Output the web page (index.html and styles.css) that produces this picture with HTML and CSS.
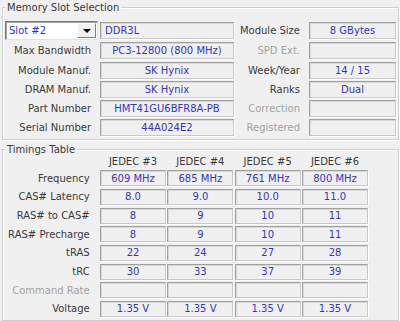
FILE: index.html
```html
<!DOCTYPE html>
<html lang="en">
<head>
    <meta charset="UTF-8">
    <title>SPD</title>
    <link rel="stylesheet" href="styles.css">
</head>
<body>
<fieldset class="group slot-group">
    <legend>Memory Slot Selection</legend>
    <div class="slot-grid">
        <div class="select">
            <span class="select-text">Slot #2</span>
            <span class="select-btn"><span class="arrow"></span></span>
        </div>
        <div class="field left">DDR3L</div>
        <div class="label">Module Size</div>
        <div class="field">8 GBytes</div>

        <div class="label">Max Bandwidth</div>
        <div class="field">PC3-12800 (800 MHz)</div>
        <div class="label off">SPD Ext.</div>
        <div class="field"></div>

        <div class="label">Module Manuf.</div>
        <div class="field">SK Hynix</div>
        <div class="label">Week/Year</div>
        <div class="field">14 / 15</div>

        <div class="label">DRAM Manuf.</div>
        <div class="field">SK Hynix</div>
        <div class="label">Ranks</div>
        <div class="field">Dual</div>

        <div class="label">Part Number</div>
        <div class="field">HMT41GU6BFR8A-PB</div>
        <div class="label off">Correction</div>
        <div class="field"></div>

        <div class="label">Serial Number</div>
        <div class="field">44A024E2</div>
        <div class="label off">Registered</div>
        <div class="field"></div>
    </div>
</fieldset>

<fieldset class="group timing-group">
    <legend>Timings Table</legend>
    <div class="timing-grid">
        <div></div>
        <div class="head">JEDEC #3</div>
        <div class="head">JEDEC #4</div>
        <div class="head">JEDEC #5</div>
        <div class="head">JEDEC #6</div>

        <div class="label">Frequency</div>
        <div class="field">609 MHz</div>
        <div class="field">685 MHz</div>
        <div class="field">761 MHz</div>
        <div class="field">800 MHz</div>

        <div class="label">CAS# Latency</div>
        <div class="field">8.0</div>
        <div class="field">9.0</div>
        <div class="field">10.0</div>
        <div class="field">11.0</div>

        <div class="label">RAS# to CAS#</div>
        <div class="field">8</div>
        <div class="field">9</div>
        <div class="field">10</div>
        <div class="field">11</div>

        <div class="label">RAS# Precharge</div>
        <div class="field">8</div>
        <div class="field">9</div>
        <div class="field">10</div>
        <div class="field">11</div>

        <div class="label">tRAS</div>
        <div class="field">22</div>
        <div class="field">24</div>
        <div class="field">27</div>
        <div class="field">28</div>

        <div class="label">tRC</div>
        <div class="field">30</div>
        <div class="field">33</div>
        <div class="field">37</div>
        <div class="field">39</div>

        <div class="label off">Command Rate</div>
        <div class="field"></div>
        <div class="field"></div>
        <div class="field"></div>
        <div class="field"></div>

        <div class="label">Voltage</div>
        <div class="field">1.35 V</div>
        <div class="field">1.35 V</div>
        <div class="field">1.35 V</div>
        <div class="field">1.35 V</div>
    </div>
</fieldset>
</body>
</html>
```

FILE: styles.css
```css
* {
    box-sizing: border-box;
    margin: 0;
    padding: 0;
}

body {
    width: 400px;
    height: 321px;
    overflow: hidden;
    background-color: #f0f0f0;
    font-family: "DejaVu Sans", Verdana, sans-serif;
    font-size: 10px;
    color: #3a3a3a;
}

.group {
    border: 1px solid #cfcfcf;
    box-shadow: inset 1px 1px 0 #fff, 1px 1px 0 #fff;
    margin: 0 1px 0 2px;
    padding: 0;
    min-width: 0;
}

.group legend {
    margin-left: 2px;
    padding: 0 2px;
    line-height: 13px;
    background-color: #f0f0f0;
    color: #3a3a3a;
}

.slot-group {
    margin-top: 1px;
    padding-bottom: 3px;
}

.timing-group {
    margin-top: 3px;
    padding-bottom: 3px;
}

.slot-grid {
    display: grid;
    grid-template-columns: 97px 135px 74px 87px;
    grid-template-rows: 19px repeat(5, 17px);
    row-gap: 2.3px;
    padding-top: 7px;
}

.timing-grid {
    display: grid;
    grid-template-columns: 95.7px repeat(4, 66px);
    grid-template-rows: 11px repeat(8, 16px);
    column-gap: 1.33px;
    row-gap: 2.7px;
}

.label {
    display: flex;
    align-items: center;
    justify-content: flex-end;
    padding-right: 9px;
    white-space: nowrap;
}

.label.off {
    color: #a3a3a3;
}

.head {
    text-align: center;
    line-height: 11px;
    white-space: nowrap;
}

.field {
    display: flex;
    align-items: center;
    justify-content: center;
    height: 17px;
    color: #3535bf;
    white-space: nowrap;
    border: 1px solid;
    border-color: #a0a0a0 #c8c8c8 #c8c8c8 #a0a0a0;
    box-shadow: inset 1px 1px 0 #d9d9d9, 1px 1px 0 #fff;
    align-self: center;
}

.timing-grid .field {
    height: 16px;
}

.slot-grid .field {
    margin-right: 1px;
}

.slot-grid .field:nth-child(4n) {
    margin-right: 0;
}

.field.left {
    justify-content: flex-start;
    padding-left: 4px;
}

.select {
    display: flex;
    align-items: stretch;
    margin: 0 2px;
    height: 19px;
    background-color: #fff;
    border: 1px solid;
    border-color: #7a7a7a #e3e3e3 #e3e3e3 #7a7a7a;
    box-shadow: inset 1px 1px 0 #a0a0a0;
}

.select-text {
    flex: 1;
    display: flex;
    align-items: center;
    padding-left: 3px;
    color: #3535bf;
}

.select-btn {
    width: 19px;
    margin: 1px 1px 1px 0;
    display: flex;
    align-items: center;
    justify-content: center;
    background-color: #f0f0f0;
    border: 1px solid;
    border-color: #fff #808080 #808080 #fff;
}

.arrow {
    width: 0;
    height: 0;
    border-left: 4px solid transparent;
    border-right: 4px solid transparent;
    border-top: 4px solid #000;
}
```
